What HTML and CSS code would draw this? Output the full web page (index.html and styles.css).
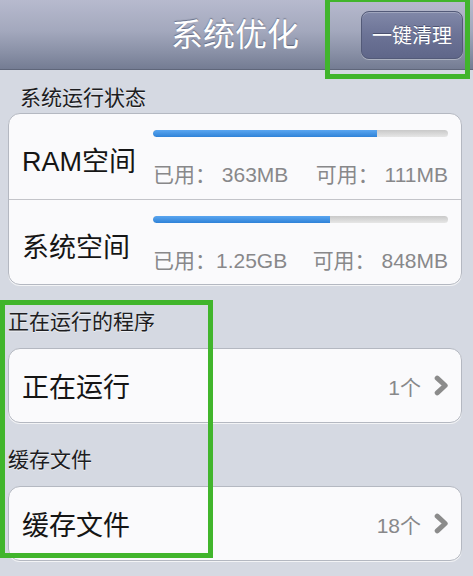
FILE: index.html
```html
<!DOCTYPE html>
<html lang="zh-CN">
<head>
<meta charset="utf-8">
<title>系统优化</title>
<link rel="stylesheet" href="styles.css">
</head>
<body>
<div class="screen">
  <header class="navbar">
    <div></div>
    <h1 class="nav-title">系统优化</h1>
    <button class="nav-btn">一键清理</button>
  </header>

  <main class="content">
    <div class="section-label first">系统运行状态</div>
    <div class="card">
      <div class="stat-row">
        <div class="stat-name">RAM空间</div>
        <div class="stat-info">
          <div class="bar"><div class="bar-fill" style="width:76%"></div></div>
          <div class="stat-nums"><span>已用： 363MB</span><span>可用： 111MB</span></div>
        </div>
      </div>
      <div class="stat-row">
        <div class="stat-name">系统空间</div>
        <div class="stat-info">
          <div class="bar"><div class="bar-fill" style="width:60%"></div></div>
          <div class="stat-nums"><span>已用：1.25GB</span><span>可用： 848MB</span></div>
        </div>
      </div>
    </div>

    <div class="section-label">正在运行的程序</div>
    <div class="card link-row">
      <span class="link-name">正在运行</span>
      <span class="link-count">1个</span>
      <svg class="chevron" width="15" height="21" viewBox="0 0 15 21"><path d="M3.2 3.2 L11.2 10.5 L3.2 17.8" fill="none" stroke="#8b8b8b" stroke-width="5" stroke-linecap="round" stroke-linejoin="round"/></svg>
    </div>

    <div class="section-label">缓存文件</div>
    <div class="card link-row">
      <span class="link-name">缓存文件</span>
      <span class="link-count">18个</span>
      <svg class="chevron" width="15" height="21" viewBox="0 0 15 21"><path d="M3.2 3.2 L11.2 10.5 L3.2 17.8" fill="none" stroke="#8b8b8b" stroke-width="5" stroke-linecap="round" stroke-linejoin="round"/></svg>
    </div>
  </main>

  <div class="highlight highlight-btn"></div>
  <div class="highlight highlight-list"></div>
</div>
</body>
</html>
```

FILE: styles.css
```css
* { box-sizing: border-box; }

html, body {
  margin: 0;
  padding: 0;
}

body {
  width: 473px;
  height: 576px;
  overflow: hidden;
  background: #d5d9e2;
  font-family: "Liberation Sans", "Noto Sans CJK SC", sans-serif;
  color: #111;
}

.screen {
  position: relative;
  width: 473px;
  height: 576px;
}

/* Navbar */
.navbar {
  height: 70px;
  display: grid;
  grid-template-columns: 1fr auto 1fr;
  align-items: center;
  background: linear-gradient(to bottom, #b7bace 0%, #a3a8bd 45%, #8a91a7 75%, #747c93 100%);
  border-bottom: 1px solid #5f667a;
}

.nav-title {
  margin: 0 0 0 -3px;
  font-weight: normal;
  font-size: 32px;
  line-height: 40px;
  color: #fff;
  text-shadow: 0 -1px 1px rgba(60, 66, 90, 0.6);
}

.nav-btn {
  justify-self: end;
  margin-right: 10px;
  width: 102px;
  height: 48px;
  padding: 0;
  border-radius: 8px;
  border: 1px solid #535a78;
  background: linear-gradient(to bottom, #8188a8 0%, #6c7396 50%, #5f6689 100%);
  box-shadow: inset 0 1px 0 rgba(255,255,255,0.25), 0 1px 0 rgba(255,255,255,0.35);
  color: #fff;
  font-family: "Liberation Sans", "Noto Sans CJK SC", sans-serif;
  font-size: 20px;
  text-shadow: 0 -1px 0 rgba(40,44,70,0.5);
}

/* Content */
.content {
  padding: 0 11px 0 8px;
}

.section-label {
  height: 30px;
  line-height: 30px;
  font-size: 21px;
  color: #1d1d1f;
  margin-top: 22px;
  margin-bottom: 11px;
  text-shadow: 0 1px 0 rgba(255,255,255,0.6);
}

.section-label.first {
  margin-top: 13px;
  margin-bottom: 0;
  padding-left: 12px;
}

.card {
  background: #fafafc;
  border: 1px solid #b4b8c1;
  border-radius: 12px;
  box-shadow: 0 1px 0 rgba(255,255,255,0.7);
}

/* Stats card */
.stat-row {
  height: 85px;
  display: flex;
  align-items: flex-start;
  padding: 0 13px 0 13px;
}

.stat-row + .stat-row {
  border-top: 1px solid #c3c4c9;
}

.stat-name {
  width: 131px;
  flex: none;
  margin-top: 30px;
  font-size: 27px;
  line-height: 36px;
  color: #151515;
  white-space: nowrap;
}

.stat-info {
  flex: 1;
  padding-top: 16px;
}

.bar {
  height: 7px;
  border-radius: 4px;
  background: linear-gradient(to bottom, #c9c9c9, #e6e6e6);
  overflow: hidden;
}

.bar-fill {
  height: 100%;
  border-radius: 4px 0 0 4px;
  background: linear-gradient(to bottom, #5aa6f0, #2f82d8);
}

.stat-nums {
  margin-top: 24px;
  display: flex;
  justify-content: space-between;
  font-size: 21px;
  line-height: 28px;
  color: #88888a;
  white-space: nowrap;
}

/* Link rows */
.link-row {
  height: 75px;
  display: flex;
  align-items: center;
  padding: 0 12px 0 13px;
}

.link-name {
  flex: 1;
  font-size: 27px;
  color: #151515;
}

.link-count {
  font-size: 21px;
  color: #88888a;
  margin-right: 13px;
}

.chevron {
  display: block;
  flex: none;
}

/* Green annotation boxes (overlays) */
.highlight {
  position: absolute;
  border: 5px solid #41b52c;
  pointer-events: none;
}

.highlight-btn {
  left: 325px;
  top: 0;
  width: 145px;
  height: 79px;
  border-top-width: 2px;
}

.highlight-list {
  left: 0;
  top: 300px;
  width: 213px;
  height: 258px;
}
```
